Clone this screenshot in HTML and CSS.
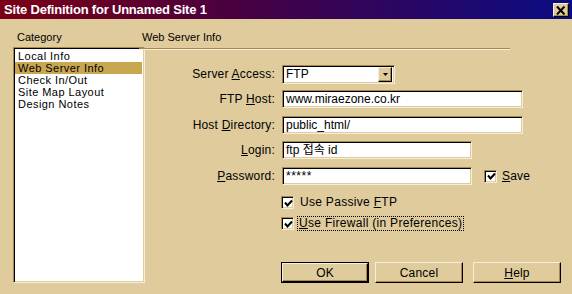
FILE: index.html
```html
<!DOCTYPE html>
<html>
<head>
<meta charset="utf-8">
<link rel="stylesheet" href="styles.css">
</head>
<body>
<div class="window">
  <div class="titlebar">
    <span class="title">Site Definition for Unnamed Site 1</span>
    <span class="close"><svg width="10" height="9" viewBox="0 0 10 9"><path d="M1 0.5 L8.5 8.5 M8.5 0.5 L1 8.5" stroke="#000" stroke-width="2" fill="none"/></svg></span>
  </div>
  <div class="main">
    <div class="category">
      <div class="cat-label">Category</div>
      <div class="listbox">
        <div class="item">Local Info</div>
        <div class="item selected">Web Server Info</div>
        <div class="item">Check In/Out</div>
        <div class="item">Site Map Layout</div>
        <div class="item">Design Notes</div>
      </div>
    </div>
    <div class="panel">
      <div class="panel-title">Web Server Info</div>
      <div class="separator"></div>
      <div class="form">
        <div class="label">Server <u>A</u>ccess:</div>
        <div class="field">
          <div class="select"><span class="select-text">FTP</span><span class="drop"><svg width="5" height="3" viewBox="0 0 5 3"><path d="M0 0 H5 L2.5 3 Z" fill="#000"/></svg></span></div>
        </div>

        <div class="label">FTP <u>H</u>ost:</div>
        <div class="field"><div class="input wide">www.miraezone.co.kr</div></div>

        <div class="label">Host <u>D</u>irectory:</div>
        <div class="field"><div class="input wide">public_html/</div></div>

        <div class="label"><u>L</u>ogin:</div>
        <div class="field"><div class="input mid">ftp 접속 id</div></div>

        <div class="label"><u>P</u>assword:</div>
        <div class="field row">
          <div class="input mid pw">*****</div>
          <label class="check save"><span class="box"><svg width="9" height="9" viewBox="0 0 9 9"><path d="M1 3.5 L3.5 6.5 L8 1.5" stroke="#000" stroke-width="2" fill="none"/></svg></span><span class="check-text"><u>S</u>ave</span></label>
        </div>

        <div class="label"></div>
        <div class="field">
          <label class="check opt"><span class="box"><svg width="9" height="9" viewBox="0 0 9 9"><path d="M1 3.5 L3.5 6.5 L8 1.5" stroke="#000" stroke-width="2" fill="none"/></svg></span><span class="check-text">Use Passive <u>F</u>TP</span></label>
        </div>

        <div class="label"></div>
        <div class="field">
          <label class="check opt"><span class="box"><svg width="9" height="9" viewBox="0 0 9 9"><path d="M1 3.5 L3.5 6.5 L8 1.5" stroke="#000" stroke-width="2" fill="none"/></svg></span><span class="check-text focus"><u>U</u>se Firewall (in Preferences)</span></label>
        </div>
      </div>
      <div class="buttons">
        <div class="btn default"><span class="btn-in">OK</span></div>
        <div class="btn"><span class="btn-in">Cancel</span></div>
        <div class="btn help"><span class="btn-in"><u>H</u>elp</span></div>
      </div>
    </div>
  </div>
</div>
</body>
</html>
```

FILE: styles.css
```css
html, body {
  margin: 0;
  padding: 0;
}
body {
  width: 572px;
  height: 294px;
  overflow: hidden;
  background: #dfcb9b;
  font-family: "Liberation Sans", Arial, "Noto Sans CJK KR", sans-serif;
  font-size: 12px;
  color: #000;
}
.window {
  width: 572px;
  height: 294px;
  display: flex;
  flex-direction: column;
}
.titlebar {
  height: 19px;
  flex: none;
  display: flex;
  align-items: center;
  justify-content: space-between;
  padding: 0 3px 0 4px;
  background: linear-gradient(to right, #7a0014 0%, #4a0040 40%, #0a0c84 100%);
  color: #fff;
  font-weight: bold;
  font-size: 13px;
  letter-spacing: -0.2px;
}
.title {
  line-height: 19px;
}
.close {
  width: 16px;
  height: 14px;
  box-sizing: border-box;
  background: #dfcb9b;
  border: 1px solid;
  border-color: #f6eedc #000 #000 #f6eedc;
  box-shadow: inset -1px -1px 0 #a6894b;
  display: flex;
  align-items: center;
  justify-content: center;
  margin-top: 1px;
}
.main {
  flex: 1;
  display: flex;
}
.category {
  width: 140px;
  flex: none;
  box-sizing: border-box;
  padding: 11px 0 0 13px;
  display: flex;
  flex-direction: column;
}
.cat-label {
  font-size: 11px;
  line-height: 14px;
  padding-left: 4px;
  margin-bottom: 3px;
}
.listbox {
  width: 132px;
  height: 236px;
  box-sizing: border-box;
  background: #fff;
  border: 1px solid;
  border-color: #a6894b #f6eedc #f6eedc #a6894b;
  box-shadow: inset 1px 1px 0 #000, inset -1px -1px 0 #dfcb9b;
  padding: 2px 2px 0 1px;
}
.item {
  font-size: 11px;
  letter-spacing: 0.45px;
  line-height: 12px;
  height: 12px;
  padding-left: 3px;
  white-space: nowrap;
}
.item.selected {
  background: #c9a650;
}
.panel {
  flex: 1;
  padding-top: 11px;
  display: flex;
  flex-direction: column;
}
.panel-title {
  font-size: 11px;
  line-height: 14px;
  padding-left: 2px;
  margin-bottom: 4px;
}
.separator {
  width: 371px;
  height: 0;
  border-top: 1px solid #a6894b;
  border-bottom: 1px solid #f6eedc;
  margin-left: -1px;
}
.form {
  margin-top: 15px;
  display: grid;
  grid-template-columns: 135px 1fr;
  column-gap: 7px;
  grid-template-rows: 25px 26px 25px 26px 29px 21px 14px;
  align-items: start;
}
.label {
  text-align: right;
  line-height: 18px;
  letter-spacing: 0.2px;
  white-space: nowrap;
}
.field {
  display: flex;
  align-items: center;
}
.input, .select {
  height: 18px;
  box-sizing: border-box;
  background: #fff;
  border: 1px solid;
  border-color: #a6894b #f6eedc #f6eedc #a6894b;
  box-shadow: inset 1px 1px 0 #000, inset -1px -1px 0 #dfcb9b;
  padding: 0 0 0 3px;
  line-height: 16px;
  white-space: nowrap;
}
.input.wide {
  width: 241px;
}
.input.mid {
  width: 190px;
}
.pw {
  letter-spacing: 0.5px;
}
.select {
  width: 113px;
  height: 19px;
  display: flex;
  align-items: center;
  justify-content: space-between;
  padding: 2px 2px 2px 3px;
}
.select-text {
  line-height: 15px;
}
.drop {
  width: 14px;
  height: 15px;
  box-sizing: border-box;
  background: #dfcb9b;
  border: 1px solid;
  border-color: #f6eedc #000 #000 #f6eedc;
  box-shadow: inset -1px -1px 0 #a6894b;
  display: flex;
  align-items: center;
  justify-content: center;
}
.check {
  display: flex;
  align-items: center;
  white-space: nowrap;
}
.box {
  width: 13px;
  height: 13px;
  box-sizing: border-box;
  background: #fff;
  border: 1px solid;
  border-color: #a6894b #f6eedc #f6eedc #a6894b;
  box-shadow: inset 1px 1px 0 #000, inset -1px -1px 0 #dfcb9b;
  display: flex;
  align-items: center;
  justify-content: center;
  padding: 1px 0 0 1px;
}
.save {
  margin-left: 12px;
}
.save .check-text {
  margin-left: 5px;
  letter-spacing: 0.2px;
}
.opt {
  margin-left: -1px;
}
.opt .check-text {
  margin-left: 5px;
  letter-spacing: 0.3px;
  line-height: 13px;
  padding: 0 1px;
}
.focus {
  outline: 1px dotted #000;
  outline-offset: 0;
  margin-left: 4px !important;
}
.buttons {
  display: flex;
  margin-top: 31px;
  padding-left: 141px;
}
.btn {
  width: 88px;
  height: 21px;
  box-sizing: border-box;
  display: flex;
}
.btn-in, .btn {
  background: #dfcb9b;
}
.btn-in {
  flex: 1;
  box-sizing: border-box;
  border: 1px solid;
  border-color: #f6eedc #000 #000 #f6eedc;
  box-shadow: inset -1px -1px 0 #a6894b;
  display: flex;
  align-items: center;
  justify-content: center;
  line-height: 14px;
  letter-spacing: 0.2px;
}
.btn.default {
  border: 1px solid #000;
}
.btn + .btn {
  margin-left: 6px;
}
.btn.help {
  margin-left: 10px;
}
```
